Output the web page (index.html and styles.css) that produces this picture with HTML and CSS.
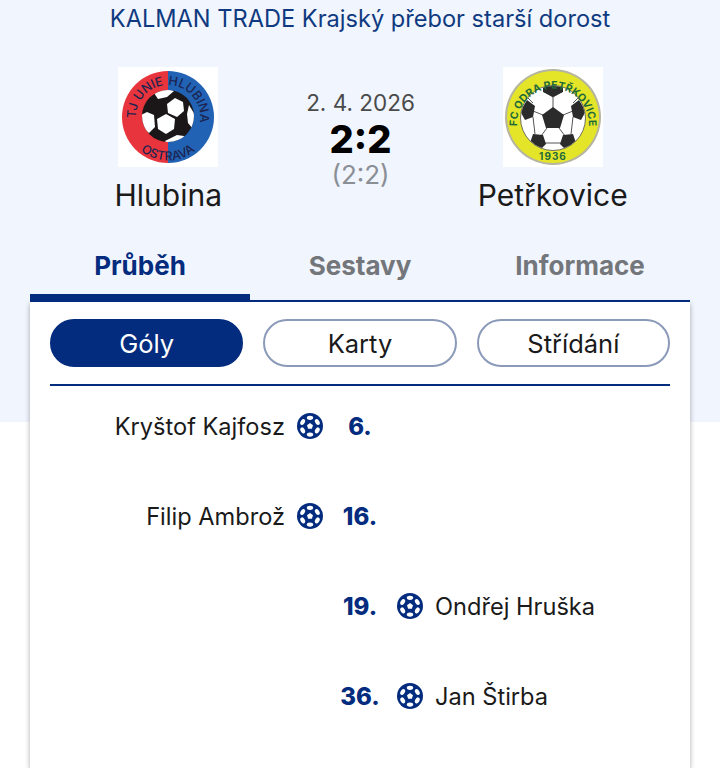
FILE: index.html
```html
<!DOCTYPE html>
<html>
<head>
    <title>Hlubina - Petřkovice</title>
    <link rel="stylesheet" href="styles.css">
</head>
<body>
    <svg class="defs" width="0" height="0">
        <symbol id="ball" viewBox="0 0 26 26">
            <circle cx="13" cy="13" r="13" fill="#032b7e"/>
            <path fill="#fff" d="M13 10l3 2.200-1.100 3.500h-3.800L10 12.200z"/>
            <g fill="#fff">
                <ellipse cx="13" cy="4.800" rx="3.200" ry="2.100"/>
                <ellipse cx="13" cy="21.600" rx="3.200" ry="2.100"/>
                <ellipse cx="5.700" cy="9" rx="3.200" ry="2.100" transform="rotate(-60 5.700 9)"/>
                <ellipse cx="20.300" cy="9" rx="3.200" ry="2.100" transform="rotate(60 20.300 9)"/>
                <ellipse cx="5.700" cy="17.400" rx="3.200" ry="2.100" transform="rotate(60 5.700 17.400)"/>
                <ellipse cx="20.300" cy="17.400" rx="3.200" ry="2.100" transform="rotate(-60 20.300 17.400)"/>
            </g>
        </symbol>
    </svg>

    <h1 class="competition">KALMAN TRADE Krajský přebor starší dorost</h1>

    <div class="match">
        <div class="team">
            <svg class="logo" viewBox="0 0 100 100">
                <defs>
                    <clipPath id="hlubina-ball"><circle cx="50" cy="49" r="26"/></clipPath>
                    <path id="arc1" d="M18.400 55.600A32 32 0 0 1 50 18"/>
                    <path id="arc2" d="M50 18A32 32 0 0 1 81.600 55.600"/>
                    <path id="arc3" d="M14 74A43 43 0 0 0 86 74"/>
                </defs>
                <rect width="100" height="100" fill="#fff"/>
                <path d="M50 4a46 46 0 0 0 0 92z" fill="#e8353d"/>
                <path d="M50 4a46 46 0 0 1 0 92z" fill="#2162b4"/>
                <circle cx="50" cy="49" r="26" fill="#1b1718"/>
                <g fill="#fff" clip-path="url(#hlubina-ball)">
                    <path d="M48 47l9 5-1 10-8 5-8-5-1-10z"/>
                    <path d="M57 31l8 4 1 9-7 6-9-4-1-9z"/>
                    <path d="M29 45l7 3 1 12-6 6-8-6v-12z"/>
                    <path d="M36 26l12-5 8 3-7 6-9 2z"/>
                    <path d="M71 38l6 10-2 14-5-6-1-9z"/>
                    <path d="M47 74l12-6 7 1 3 5-11 4-9-1z"/>
                </g>
                <text class="logo-text"><textPath href="#arc1" startOffset="50%">TJ UNIE</textPath></text>
                <text class="logo-text"><textPath href="#arc2" startOffset="50%">HLUBINA</textPath></text>
                <text class="logo-text"><textPath href="#arc3" startOffset="50%">OSTRAVA</textPath></text>
            </svg>
            <div class="team-name">Hlubina</div>
        </div>
        <div class="score">
            <div class="score-date">2. 4. 2026</div>
            <div class="score-main">2:2</div>
            <div class="score-half">(2:2)</div>
        </div>
        <div class="team">
            <svg class="logo" viewBox="0 0 100 100">
                <defs>
                    <clipPath id="odra-ball"><circle cx="50" cy="51" r="32"/></clipPath>
                    <path id="arc4" d="M15 66A36 36 0 1 1 85 66"/>
                </defs>
                <rect width="100" height="100" fill="#fff"/>
                <circle cx="50" cy="50" r="48" fill="#b5b5a0"/>
                <circle cx="50" cy="50" r="46" fill="#e4e428"/>
                <circle cx="50" cy="51" r="32.500" fill="#fff" stroke="#6f6f5a"/>
                <g clip-path="url(#odra-ball)">
                    <g stroke="#555" fill="none">
                        <path d="M50 41V30L40 24M50 30l10-6M40 48l-10-4M60 48l10-4M44 61l-6 8M56 61l6 8M30 50l2 17M70 50l-2 17M42 76h16M24 30l6 6M76 30l-6 6"/>
                    </g>
                    <g fill="#2b2b2b">
                        <path d="M50 40l11 8-4 13H43l-4-13z"/>
                        <path d="M40 15h20v10l-10 5-10-5z"/>
                        <path d="M24 33l8 6-2 11-8 3-5-9z"/>
                        <path d="M76 33l-8 6 2 11 8 3 5-9z"/>
                        <path d="M30 67l10 1 3 9-8 8-9-6z"/>
                        <path d="M70 67l-10 1-3 9 8 8 9-6z"/>
                    </g>
                </g>
                <text class="logo-text logo-text-green"><textPath href="#arc4" startOffset="50%">FC ODRA PETŘKOVICE</textPath></text>
                <text class="logo-year" x="50" y="93">1936</text>
            </svg>
            <div class="team-name">Petřkovice</div>
        </div>
    </div>

    <div class="tabs">
        <div class="tab tab-active">Průběh</div>
        <div class="tab">Sestavy</div>
        <div class="tab">Informace</div>
    </div>

    <div class="card">
        <div class="filters">
            <button class="pill pill-active">Góly</button>
            <button class="pill">Karty</button>
            <button class="pill">Střídání</button>
        </div>

        <div class="events">
            <div class="event">
                <span class="player player-home">Kryštof Kajfosz</span>
                <svg class="ball"><use href="#ball"/></svg>
                <span class="minute">6.</span>
            </div>
            <div class="event">
                <span class="player player-home">Filip Ambrož</span>
                <svg class="ball"><use href="#ball"/></svg>
                <span class="minute">16.</span>
            </div>
            <div class="event">
                <span class="minute minute-away">19.</span>
                <svg class="ball ball-away"><use href="#ball"/></svg>
                <span class="player player-away">Ondřej Hruška</span>
            </div>
            <div class="event">
                <span class="minute minute-away">36.</span>
                <svg class="ball ball-away"><use href="#ball"/></svg>
                <span class="player player-away">Jan Štirba</span>
            </div>
        </div>
    </div>
</body>
</html>
```

FILE: styles.css
```css
/* page */
html {
    height: 768px;
    overflow: hidden;
}
body {
    margin: 0;
    font-family: Inter, "Noto Sans", sans-serif;
    background: linear-gradient(#f1f5fd 422px, #fff 422px);
    color: #1a1a1a;
}
.defs {
    display: block;
}

/* header */
.competition {
    margin: 0;
    font-size: 23.6px;
    line-height: 38px;
    font-weight: 400;
    text-align: center;
    color: #0f3a80;
}

.match {
    display: grid;
    grid-template-columns: 1fr 108px 1fr;
    padding: 29px 29px 0 30px;
}
.team {
    display: flex;
    flex-direction: column;
    align-items: center;
}
.logo {
    width: 100px;
    height: 100px;
}
.logo-text {
    font-size: 12.5px;
    font-weight: 500;
    text-anchor: middle;
    fill: #1c2450;
}
.logo-text-green {
    font-size: 10.5px;
    font-weight: 700;
    fill: #1f6b3a;
}
.logo-year {
    font-size: 10px;
    font-weight: 700;
    letter-spacing: 1px;
    fill: #1f6b3a;
    text-anchor: middle;
}
.team-name {
    margin-top: 9px;
    font-size: 30px;
    line-height: 38px;
    color: #1a1a1a;
}

.score {
    display: flex;
    flex-direction: column;
    align-items: center;
    padding-top: 22px;
    white-space: nowrap;
}
.score-date {
    font-size: 22.5px;
    line-height: 28px;
    color: #4a4a4a;
}
.score-main {
    margin-top: 2px;
    font-size: 38px;
    line-height: 40px;
    font-weight: 800;
    color: #000;
}
.score-half {
    font-size: 26px;
    line-height: 32px;
    color: #8a8f96;
}

/* tabs */
.tabs {
    display: grid;
    grid-template-columns: repeat(3, 1fr);
    margin: 36px 30px 0;
    border-bottom: 2px solid #032b7e;
}
.tab {
    height: 50px;
    font-size: 26px;
    line-height: 32px;
    font-weight: 700;
    text-align: center;
    color: #73767a;
}
.tab-active {
    color: #032b7e;
    box-shadow: inset 0 -8px 0 #032b7e;
    margin-bottom: -2px;
    height: 52px;
}

/* card */
.card {
    box-sizing: border-box;
    margin: 0 30px;
    padding: 17px 20px 0;
    height: 466px;
    background: #fff;
    box-shadow: 0 2px 5px rgba(70, 70, 70, 0.45);
}
.filters {
    display: grid;
    grid-template-columns: repeat(3, 1fr);
    gap: 20px;
    padding-bottom: 17px;
    border-bottom: 2px solid #032b7e;
}
.pill {
    height: 48px;
    border: 2px solid #8b9ab8;
    border-radius: 24px;
    background: #fff;
    font-family: inherit;
    font-size: 25.5px;
    color: #1a1a1a;
}
.pill-active {
    background: #032b7e;
    border-color: #032b7e;
    color: #fff;
}

/* goals */
.events {
    display: grid;
    gap: 10px;
}
.event {
    display: grid;
    grid-template-columns: 1fr 26px 74px 26px 1fr;
    align-items: center;
    height: 80px;
}
.player {
    font-size: 23.6px;
    color: #1a1a1a;
}
.player-home {
    grid-column: 1;
    text-align: right;
    padding-right: 12px;
}
.player-away {
    grid-column: 5;
    padding-left: 12px;
}
.ball {
    width: 26px;
    height: 26px;
}
.minute {
    grid-column: 3;
    font-size: 24px;
    font-weight: 800;
    text-align: center;
    color: #032b7e;
}
.minute-away {
    grid-row: 1;
}
.ball-away {
    grid-column: 4;
}
```
